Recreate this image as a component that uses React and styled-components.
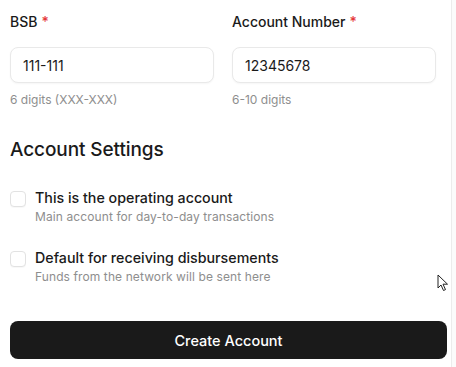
import React from "react";
import styled, { createGlobalStyle } from "styled-components";

const Global = createGlobalStyle`
  html, body { margin: 0; padding: 0; background: #ffffff; }
  body { font-family: Inter, "Noto Sans", sans-serif; color: #1a1a1a; -webkit-font-smoothing: antialiased; }
  * { box-sizing: border-box; }
`;

const Page = styled.div`
  position: relative;
  display: flex;
  width: 456px;
  height: 367px;
  overflow: hidden;
`;

const Main = styled.div`
  width: 452px;
  border-right: 1px solid #ececec;
  padding: 12px 0 0 10px;
  display: flex;
  flex-direction: column;
`;

const Gutter = styled.div`
  flex: 1;
  background: #fbfbfb;
`;

const FieldGrid = styled.div`
  display: grid;
  grid-template-columns: 204px 204px;
  column-gap: 18px;
`;

const Field = styled.div`
  display: flex;
  flex-direction: column;
`;

const Label = styled.label`
  font-size: 14px;
  line-height: 20px;
  font-weight: 500;
  color: #1a1a1a;
  margin-bottom: 15px;
`;

const Required = styled.span`
  color: #e5383b;
  margin-left: 4px;
`;

const Input = styled.input`
  height: 36px;
  width: 100%;
  border: 1px solid #e9e9e9;
  border-radius: 8px;
  padding: 0 12px;
  font-family: inherit;
  font-size: 14px;
  color: #1a1a1a;
  background: #fff;
  box-shadow: 0 1px 2px rgba(0, 0, 0, 0.04);
  outline: none;
`;

const Helper = styled.div`
  margin-top: 8px;
  font-size: 12px;
  line-height: 18px;
  color: #8e8e8e;
`;

const Heading = styled.h2`
  margin: 27px 0 0;
  font-size: 19px;
  line-height: 28px;
  font-weight: 500;
  color: #1a1a1a;
  letter-spacing: -0.1px;
`;

const Options = styled.div`
  margin-top: 24px;
  display: flex;
  flex-direction: column;
  gap: 22px;
`;

const Option = styled.label`
  display: flex;
  align-items: flex-start;
  gap: 9px;
  cursor: pointer;
`;

const Box = styled.span`
  width: 16px;
  height: 16px;
  margin-top: 3px;
  border: 1px solid #e2e2e2;
  border-radius: 4px;
  background: #fff;
  flex-shrink: 0;
  box-shadow: 0 1px 1px rgba(0, 0, 0, 0.03);
`;

const OptionText = styled.span`
  display: flex;
  flex-direction: column;
`;

const OptionTitle = styled.span`
  font-size: 14.25px;
  line-height: 20px;
  font-weight: 500;
  color: #1a1a1a;
`;

const OptionSub = styled.span`
  font-size: 12px;
  line-height: 18px;
  letter-spacing: 0.1px;
  color: #8e8e8e;
`;

const Button = styled.button`
  margin-top: 35px;
  width: 437px;
  height: 38px;
  border: none;
  border-radius: 8px;
  background: #1a1a1a;
  color: #fff;
  font-family: inherit;
  font-size: 14.5px;
  font-weight: 500;
`;

const Cursor = styled.svg`
  position: absolute;
  left: 437px;
  top: 274px;
`;

export default function App() {
  return (
    <Page>
      <Global />
      <Main>
        <FieldGrid>
          <Field>
            <Label>
              BSB<Required>*</Required>
            </Label>
            <Input defaultValue="111-111" />
            <Helper>6 digits (XXX-XXX)</Helper>
          </Field>
          <Field>
            <Label>
              Account Number<Required>*</Required>
            </Label>
            <Input defaultValue="12345678" />
            <Helper>6-10 digits</Helper>
          </Field>
        </FieldGrid>
        <Heading>Account Settings</Heading>
        <Options>
          <Option>
            <Box />
            <OptionText>
              <OptionTitle>This is the operating account</OptionTitle>
              <OptionSub>Main account for day-to-day transactions</OptionSub>
            </OptionText>
          </Option>
          <Option>
            <Box />
            <OptionText>
              <OptionTitle>Default for receiving disbursements</OptionTitle>
              <OptionSub>Funds from the network will be sent here</OptionSub>
            </OptionText>
          </Option>
        </Options>
        <Button>Create Account</Button>
      </Main>
      <Gutter />
      <Cursor width="13" height="18" viewBox="0 0 13 18">
        <path d="M1 1 L1 14 L4 11 L6.5 16.5 L8.5 15.6 L6 10.2 L10.5 10.2 Z" fill="#fff" stroke="#222" strokeWidth="1" strokeLinejoin="round" />
      </Cursor>
    </Page>
  );
}
